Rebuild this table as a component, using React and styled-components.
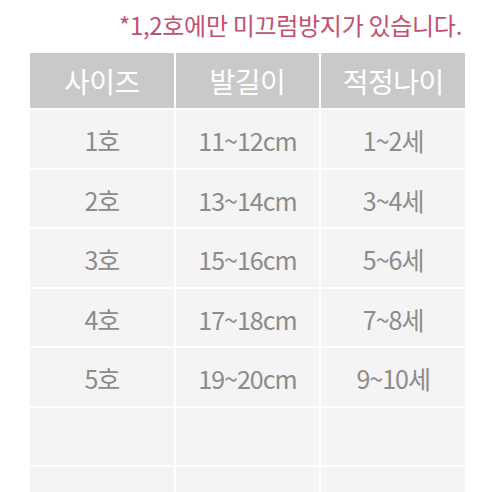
import React from 'react';
import styled, { createGlobalStyle } from 'styled-components';

const GlobalStyle = createGlobalStyle`
    html, body {
        margin: 0;
        padding: 0;
        background: #ffffff;
    }
    body {
        font-family: "Noto Sans CJK KR", "Noto Sans", sans-serif;
        overflow: hidden;
    }
`;

const Page = styled.div`
    width: 492px;
    height: 492px;
    overflow: hidden;
    padding: 9px 27px 0 30px;
    box-sizing: border-box;
`;

const Notice = styled.div`
    text-align: right;
    color: #c2506f;
    font-size: 24px;
    line-height: 32px;
    letter-spacing: -0.3px;
    padding-right: 3px;
    margin-bottom: 12px;
    white-space: nowrap;
`;

const Table = styled.div`
    display: grid;
    grid-template-columns: repeat(3, 1fr);
    grid-auto-rows: 57.5px;
    grid-template-rows: 55px;
    gap: 2px;
    width: 435px;
    background: #ffffff;
`;

const HeadCell = styled.div`
    background: #c9c9c9;
    color: #ffffff;
    font-size: 28px;
    display: flex;
    align-items: center;
    justify-content: center;
    letter-spacing: -0.5px;
`;

const Cell = styled.div`
    background: #f4f4f4;
    color: #8c8c8c;
    font-size: 25px;
    display: flex;
    align-items: center;
    justify-content: center;
    letter-spacing: -1px;
    padding-top: 3px;
    box-sizing: border-box;
`;

const headers = ['사이즈', '발길이', '적정나이'];

const rows = [
    ['1호', '11~12cm', '1~2세'],
    ['2호', '13~14cm', '3~4세'],
    ['3호', '15~16cm', '5~6세'],
    ['4호', '17~18cm', '7~8세'],
    ['5호', '19~20cm', '9~10세'],
    ['', '', ''],
    ['', '', ''],
];

const App = () => {
    return (
        <>
            <GlobalStyle />
            <Page>
                <Notice>*1,2호에만 미끄럼방지가 있습니다.</Notice>
                <Table>
                    {headers.map((h) => (
                        <HeadCell key={h}>{h}</HeadCell>
                    ))}
                    {rows.map((row, i) =>
                        row.map((value, j) => (
                            <Cell key={`${i}-${j}`}>{value}</Cell>
                        ))
                    )}
                </Table>
            </Page>
        </>
    );
};

export default App;
